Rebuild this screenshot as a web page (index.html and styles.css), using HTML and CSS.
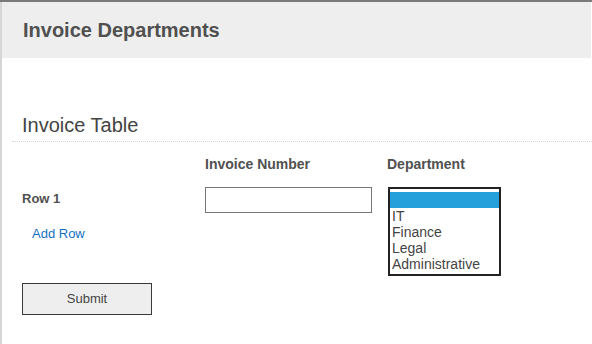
FILE: index.html
```html
<!DOCTYPE html>
<html lang="en">
<head>
    <meta charset="UTF-8">
    <meta name="viewport" content="width=device-width, initial-scale=1.0">
    <title>Invoice Departments</title>
    <link rel="stylesheet" href="styles.css">
</head>
<body>
    <div class="page">
        <header class="page-header">
            <h1>Invoice Departments</h1>
        </header>

        <section class="content">
            <h2>Invoice Table</h2>

            <div class="invoice-grid">
                <div class="col-head"></div>
                <div class="col-head">Invoice Number</div>
                <div class="col-head">Department</div>

                <div class="row-label">
                    <div class="row-name">Row 1</div>
                    <a href="#" class="add-row">Add Row</a>
                </div>
                <div>
                    <input type="text" class="invoice-input">
                </div>
                <div>
                    <select class="dept-select" size="5">
                        <option value="" selected></option>
                        <option>IT</option>
                        <option>Finance</option>
                        <option>Legal</option>
                        <option>Administrative</option>
                    </select>
                </div>
            </div>

            <div class="actions">
                <button type="button" class="submit-btn">Submit</button>
            </div>
        </section>
    </div>
</body>
</html>
```

FILE: styles.css
```css
body {
    margin: 0;
    padding: 0;
    font-family: "Liberation Sans", Arial, sans-serif;
    color: #444;
    background: white;
    border-top: 2px solid #7a7a7a;
}

.page {
    border-left: 2px solid #d6d6d6;
    min-height: calc(100vh - 2px);
    box-sizing: border-box;
}

.page-header {
    height: 56px;
    background-color: #eeeeee;
    margin-right: 1px;
    padding-left: 21px;
    display: flex;
    align-items: center;
}

.page-header h1 {
    margin: 0;
    font-size: 20px;
    font-weight: bold;
    color: #505050;
}

.content {
    padding-left: 10px;
}

.content h2 {
    margin: 55px 0 0 0;
    padding: 0 0 4px 10px;
    font-size: 20px;
    font-weight: normal;
    line-height: 24px;
    color: #444;
    border-bottom: 1px dotted #d8d8d8;
}

.invoice-grid {
    display: grid;
    grid-template-columns: 183px 182px auto;
    padding-left: 10px;
    margin-top: 14px;
}

.col-head {
    font-size: 14px;
    font-weight: bold;
    line-height: 16px;
    color: #505050;
    margin-bottom: 15px;
}

.row-label {
    padding-top: 4px;
}

.row-name {
    font-size: 13px;
    font-weight: bold;
    line-height: 16px;
    color: #505050;
}

.add-row {
    display: inline-block;
    margin: 19px 0 0 10px;
    font-size: 13px;
    line-height: 16px;
    color: #1270c4;
    text-decoration: none;
}

.invoice-input {
    display: block;
    box-sizing: border-box;
    width: 167px;
    height: 26px;
    margin: 0;
    border: 1px solid #767676;
    border-radius: 0;
    padding: 2px 4px;
    font-family: inherit;
    font-size: 14px;
    outline: none;
}

.dept-select {
    display: block;
    box-sizing: border-box;
    width: 113px;
    height: 89px;
    margin: 0 0 0 1px;
    padding: 3px 0 2px;
    border: 2px solid #222;
    border-radius: 0;
    font-family: inherit;
    font-size: 14px;
    color: #444;
    overflow: hidden;
    outline: none;
}

.dept-select option {
    box-sizing: border-box;
    min-height: 0;
    height: 16px;
    line-height: 16px;
    padding: 0 2px;
}

.dept-select option:checked {
    background: #26a0da linear-gradient(#26a0da, #26a0da);
    color: white;
}

.actions {
    padding-left: 10px;
    margin-top: 7px;
}

.submit-btn {
    width: 130px;
    height: 32px;
    padding: 0 0 2px;
    background-color: #eeeeee;
    border: 1px solid #3a3a3a;
    border-radius: 0;
    font-family: inherit;
    font-size: 13px;
    color: #444;
    cursor: pointer;
}
```
